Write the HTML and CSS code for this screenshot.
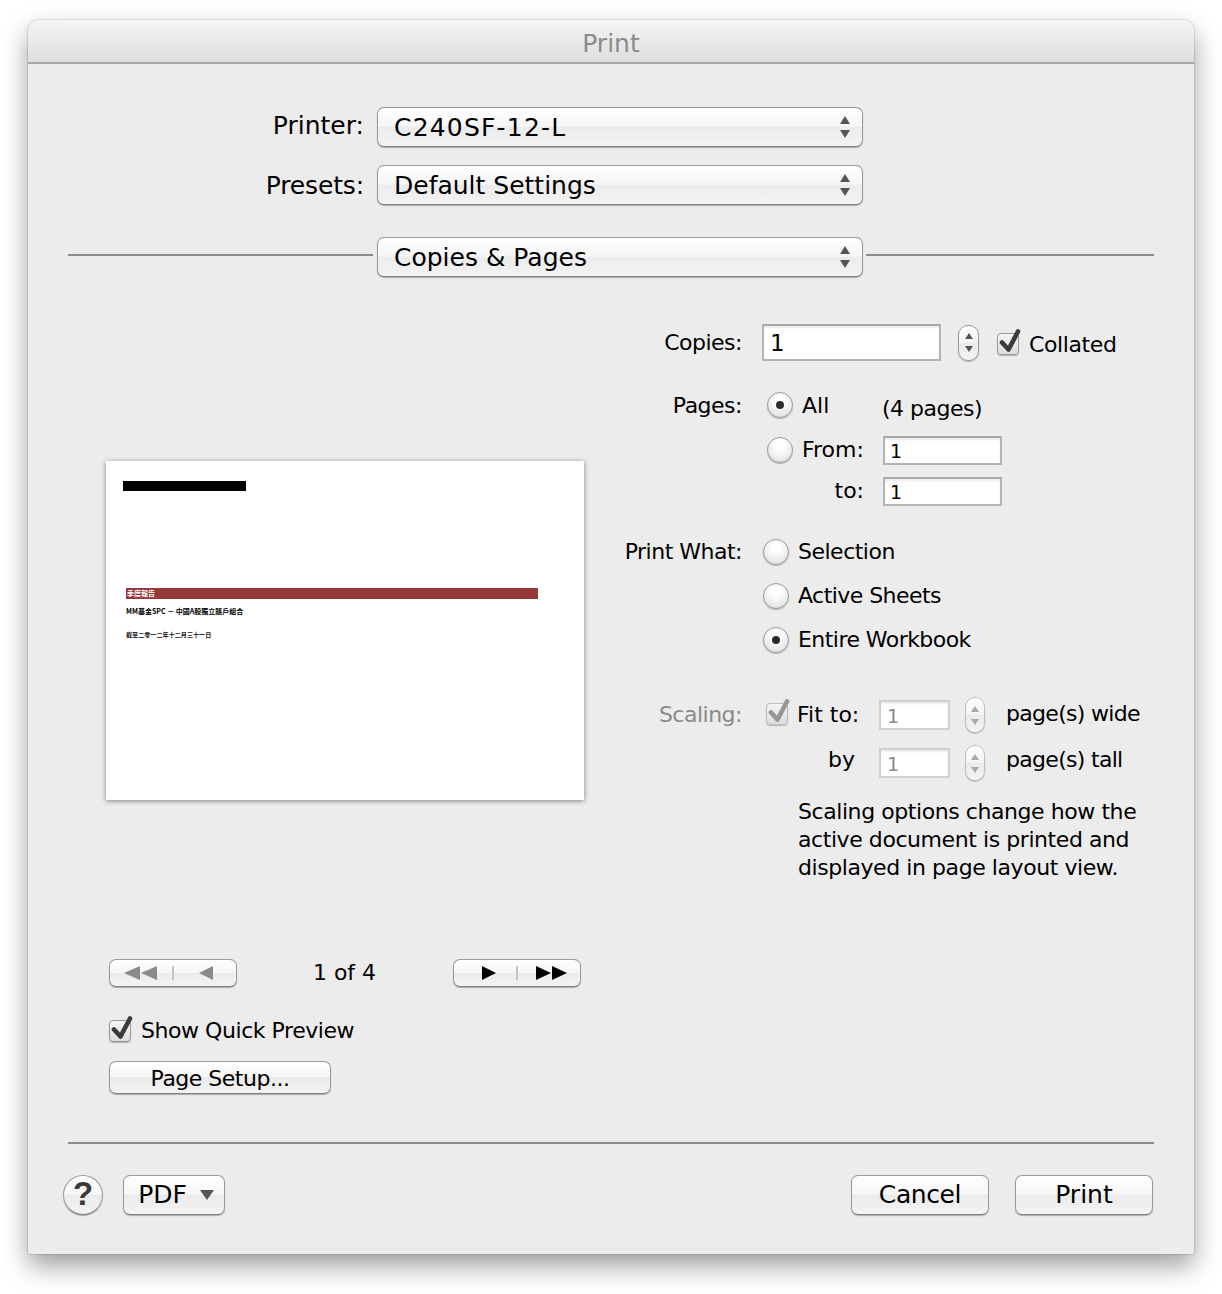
FILE: index.html
```html
<!DOCTYPE html>
<html lang="en">
<head>
<meta charset="utf-8">
<title>Print</title>
<link rel="stylesheet" href="styles.css">
</head>
<body>
<svg class="defs" width="0" height="0">
  <symbol id="updown" viewBox="0 0 10 22"><path d="M5 0L10 8H0Z"/><path d="M0 14H10L5 22Z"/></symbol>
  <symbol id="check" viewBox="0 0 26 30"><path d="M6 14.5L12.5 21.5L22 3.5" fill="none" stroke-width="4.6" stroke-linecap="round" stroke-linejoin="round"/></symbol>
</svg>
<div class="window">
  <div class="titlebar">Print</div>
  <div class="main">
    <div class="top-row first">
      <label class="top-label printer-label">Printer:</label>
      <div class="btn select"><span class="select-text select-wide">C240SF-12-L</span><svg class="updown"><use href="#updown"/></svg></div>
    </div>
    <div class="top-row second">
      <label class="top-label presets-label">Presets:</label>
      <div class="btn select"><span class="select-text">Default Settings</span><svg class="updown"><use href="#updown"/></svg></div>
    </div>
    <div class="section-row">
      <div class="rule rule-left"></div>
      <div class="btn select"><span class="select-text">Copies &amp; Pages</span><svg class="updown"><use href="#updown"/></svg></div>
      <div class="rule rule-right"></div>
    </div>

    <div class="panes">
      <div class="left">
        <div class="sheet">
          <div class="sheet-black"></div>
          <div class="sheet-red">季度報告</div>
          <div class="sheet-line">MM基金SPC － 中國A股獨立賬戶組合</div>
          <div class="sheet-date">截至二零一二年十二月三十一日</div>
        </div>
        <div class="nav">
          <div class="btn navbtn">
            <span class="seg"><svg class="tri-double nudge-l" viewBox="0 0 33 14"><path class="dim" d="M0 7L16 0V14Z"/><path class="dim" d="M17 7L33 0V14Z"/></svg></span>
            <span class="seg seg-line"><svg class="tri-single nudge-r" viewBox="0 0 14 14"><path class="dim" d="M0 7L14 0V14Z"/></svg></span>
          </div>
          <span class="nav-count">1 of 4</span>
          <div class="btn navbtn">
            <span class="seg"><svg class="tri-single nudge-r2" viewBox="0 0 14 14"><path d="M0 0L14 7L0 14Z"/></svg></span>
            <span class="seg seg-line"><svg class="tri-double nudge-r3" viewBox="0 0 31 14"><path d="M0 0L15 7L0 14Z"/><path d="M16 0L31 7L16 14Z"/></svg></span>
          </div>
        </div>
        <div class="quick">
          <span class="checkbox"><svg class="tick"><use href="#check"/></svg></span>
          <span class="quick-text">Show Quick Preview</span>
        </div>
        <div class="btn setup">Page Setup...</div>
      </div>

      <div class="right">
        <div class="row copies">
          <span class="lbl">Copies:</span>
          <span class="field field-big">1</span>
          <span class="stepper stepper-copies"><i class="up"></i><i class="down"></i></span>
          <span class="checkbox collated-box"><svg class="tick"><use href="#check"/></svg></span>
          <span class="txt collated-text">Collated</span>
        </div>

        <div class="row pages-all">
          <span class="lbl">Pages:</span>
          <span class="radio radio-pages on"></span>
          <span class="txt all-text">All</span>
          <span class="txt count-text">(4 pages)</span>
        </div>
        <div class="row pages-from">
          <span class="lbl"></span>
          <span class="radio radio-pages"></span>
          <span class="txt from-text">From:</span>
          <span class="field field-range">1</span>
        </div>
        <div class="row pages-to">
          <span class="lbl"></span>
          <span class="txt to-text">to:</span>
          <span class="field field-range">1</span>
        </div>

        <div class="row what-first">
          <span class="lbl">Print What:</span>
          <span class="radio"></span>
          <span class="txt what-text">Selection</span>
        </div>
        <div class="row what-next">
          <span class="lbl"></span>
          <span class="radio"></span>
          <span class="txt what-text">Active Sheets</span>
        </div>
        <div class="row what-next">
          <span class="lbl"></span>
          <span class="radio on"></span>
          <span class="txt what-text">Entire Workbook</span>
        </div>

        <div class="row scale-first">
          <span class="lbl lbl-dim">Scaling:</span>
          <span class="checkbox checkbox-dim"><svg class="tick"><use href="#check"/></svg></span>
          <span class="txt fit-text">Fit to:</span>
          <span class="field field-dim">1</span>
          <span class="stepper stepper-dim"><i class="up"></i><i class="down"></i></span>
          <span class="txt unit-text">page(s) wide</span>
        </div>
        <div class="row scale-next">
          <span class="lbl"></span>
          <span class="txt by-text">by</span>
          <span class="field field-dim">1</span>
          <span class="stepper stepper-dim"><i class="up"></i><i class="down"></i></span>
          <span class="txt unit-text">page(s) tall</span>
        </div>
        <p class="note">Scaling options change how the<br>active document is printed and<br>displayed in page layout view.</p>
      </div>
    </div>

    <div class="rule rule-bottom"></div>
    <div class="footer">
      <div class="btn help">?</div>
      <div class="btn action pdf">PDF<svg class="pdf-arrow" viewBox="0 0 14 10"><path d="M0 0H14L7 10Z"/></svg></div>
      <div class="btn action cancel">Cancel</div>
      <div class="btn action print">Print</div>
    </div>
  </div>
</div>
</body>
</html>
```
FILE: styles.css
```css
* { box-sizing: border-box; }
html, body { margin: 0; padding: 0; background: #fff; }
body {
  width: 1222px;
  height: 1294px;
  overflow: hidden;
  padding: 20px 0 0 28px;
  font-family: "DejaVu Sans", sans-serif;
  color: #000;
}
.defs { position: absolute; }

.window {
  width: 1166px;
  height: 1234px;
  background: #ececec;
  border-radius: 10px 10px 2px 2px;
  box-shadow: 0 0 2px rgba(0,0,0,.35), 0 12px 26px rgba(0,0,0,.38);
}
.titlebar {
  height: 44px;
  border-bottom: 2px solid #a6a6a6;
  border-radius: 10px 10px 0 0;
  background: linear-gradient(#f4f4f4, #dedede);
  text-align: center;
  font-size: 25px;
  line-height: 48px;
  color: #8a8a8a;
}
.main { padding: 0 40px; }

/* shared control skin */
.btn {
  border: 1px solid #9a9a9a;
  border-bottom-color: #808080;
  border-radius: 7px;
  background: linear-gradient(#ffffff 0%, #f6f6f6 48%, #ebebeb 50%, #f3f3f3 100%);
  box-shadow: 0 1px 1px rgba(0,0,0,.28);
}

/* top selects */
.top-row { display: flex; align-items: center; height: 40px; }
.top-row.first { margin-top: 43px; }
.top-row.second { margin-top: 18px; }
.top-label {
  width: 296px;
  text-align: right;
  font-size: 25px;
  margin-right: 13px;
}
.printer-label { position: relative; top: -2px; }
.presets-label { letter-spacing: -.15px; }
.select {
  width: 486px;
  height: 40px;
  flex: none;
  display: flex;
  align-items: center;
  justify-content: space-between;
  padding: 0 12px 0 16px;
}
.select-text { font-size: 25px; }
.select-wide { letter-spacing: 1.2px; }
.updown { width: 10px; height: 22px; fill: #555; }
.section-row { display: flex; align-items: center; height: 40px; margin-top: 32px; }
.rule { height: 2px; background: #8c8c8c; }
.section-row .rule { position: relative; top: -2px; }
.rule-left { width: 305px; margin-right: 4px; }
.rule-right { width: 288px; margin-left: 3px; }
.rule-bottom { margin-top: 47px; }

/* panes */
.panes { display: flex; height: 818px; }
.left { width: 532px; padding: 184px 0 0 38px; }
.right { width: 554px; padding-top: 47px; }

/* preview sheet */
.sheet {
  width: 478px;
  height: 339px;
  background: #fff;
  padding: 20px 0 0 17px;
  box-shadow: 0 1px 5px rgba(0,0,0,.45);
  font-family: "Noto Sans CJK TC", serif;
}
.sheet-black { width: 123px; height: 10px; background: #000; }
.sheet-red {
  width: 412px;
  height: 11px;
  margin: 97px 0 0 3px;
  background: #943838;
  color: #fff;
  font-size: 7px;
  line-height: 10px;
  font-weight: 700;
  padding-left: 1px;
}
.sheet-line { margin: 7px 0 0 3px; font-size: 7px; line-height: 10px; font-weight: 700; }
.sheet-date { margin: 14px 0 0 3px; font-size: 6.1px; line-height: 10px; font-weight: 700; color: #111; }

/* nav */
.nav { display: flex; align-items: center; margin: 159px 0 0 3px; width: 472px; justify-content: space-between; height: 28px; }
.navbtn { width: 128px; height: 28px; display: flex; align-items: center; }
.seg { flex: 1; height: 14px; display: flex; align-items: center; justify-content: center; }
.seg-line { border-left: 2px solid #c4c4c4; }
.tri-double { width: 33px; height: 14px; fill: #000; }
.tri-single { width: 14px; height: 14px; fill: #000; }
.nudge-l { margin-right: 1px; }
.nudge-r { margin-left: 2px; }
.nudge-r2 { margin-left: 8px; }
.nudge-r3 { margin-left: 4px; }
.dim { fill: #8a8a8a; }
.nav-count { font-size: 22px; position: relative; top: -1px; margin-left: -1px; }

.quick { display: flex; align-items: center; margin: 28px 0 0 3px; height: 30px; }
.quick .checkbox { top: 1px; }
.quick-text { margin-left: 10px; font-size: 22px; letter-spacing: -.45px; }
.setup {
  width: 222px;
  height: 33px;
  margin: 16px 0 0 3px;
  text-align: center;
  font-size: 22px;
  letter-spacing: -.5px;
  line-height: 33px;
}

/* checkbox, radio, field, stepper */
.checkbox {
  position: relative;
  flex: none;
  width: 22px;
  height: 22px;
  border: 1px solid #9a9a9a;
  border-radius: 4px;
  background: linear-gradient(#f5f5f5, #dcdcdc);
  box-shadow: 0 1px 1px rgba(0,0,0,.25);
}
.tick {
  position: absolute;
  left: -2px;
  top: -6px;
  width: 26px;
  height: 30px;
  stroke: #3a3a3a;
}
.checkbox-dim { opacity: .9; border-color: #b8b8b8; }
.checkbox-dim .tick { stroke: #8c8c8c; }

.radio {
  flex: none;
  width: 26px;
  height: 26px;
  border: 1px solid #9a9a9a;
  border-radius: 50%;
  background: radial-gradient(circle at 50% 30%, #ffffff 20%, #f0f0f0 55%, #d8d8d8 100%);
  box-shadow: 0 1px 1px rgba(0,0,0,.25);
  display: flex;
  align-items: center;
  justify-content: center;
}
.radio.on::after {
  content: "";
  width: 8px;
  height: 8px;
  border-radius: 50%;
  background: #2c2c2c;
}
.radio-pages { margin-left: 4px; }

.field {
  flex: none;
  display: block;
  background: #fff;
  border: 2px solid #b4b4b4;
  border-top-color: #a8a8a8;
  box-shadow: inset 0 2px 2px #ededed;
}
.field-big { width: 179px; height: 37px; font-size: 23px; line-height: 35px; padding-left: 6px; margin-left: -1px; }
.field-range { width: 119px; height: 29px; font-size: 19px; line-height: 27px; padding-left: 5px; }
.field-dim {
  width: 71px;
  height: 30px;
  font-size: 19px;
  line-height: 29px;
  padding-left: 6px;
  color: #8a8a8a;
  border-color: #d0d0d0;
  margin-left: 19px;
}

.stepper {
  position: relative;
  flex: none;
  border: 1px solid #9a9a9a;
  border-radius: 10px;
  background: linear-gradient(#ffffff, #f4f4f4 48%, #e9e9e9 50%, #f4f4f4);
  box-shadow: 0 1px 1px rgba(0,0,0,.25);
  display: flex;
  flex-direction: column;
  align-items: center;
  justify-content: center;
  gap: 7px;
}
.stepper-copies { width: 21px; height: 36px; margin-left: 17px; }
.stepper-dim { width: 20px; height: 36px; margin-left: 16px; border-color: #c0c0c0; }
.up, .down { display: block; width: 0; height: 0; border-left: 4px solid transparent; border-right: 4px solid transparent; }
.up { border-bottom: 6px solid #555; }
.down { border-top: 6px solid #555; }
.stepper-dim .up { border-bottom-color: #a8a8a8; }
.stepper-dim .down { border-top-color: #a8a8a8; }

/* right rows */
.row { display: flex; align-items: center; height: 30px; }
.lbl { flex: none; position: relative; top: -1px; width: 142px; margin-right: 21px; text-align: right; font-size: 22px; letter-spacing: -.5px; }
.copies .lbl { top: 0; }
.lbl-dim { color: #8a8a8a; }
.txt { position: relative; font-size: 22px; letter-spacing: -.5px; white-space: nowrap; }
.copies { height: 37px; }
.collated-box { margin-left: 18px; top: 1px; }
.collated-text { margin-left: 10px; top: 2px; letter-spacing: -.4px; }
.pages-all { margin-top: 29px; }
.pages-all .lbl { top: 0; }
.all-text { margin-left: 9px; width: 80px; top: 0; letter-spacing: 0; }
.count-text { top: 3px; margin-left: 0; }
.pages-from { margin-top: 15px; }
.from-text { margin-left: 9px; width: 81px; top: -1px; letter-spacing: 0; }
.pages-to { margin-top: 11px; }
.to-text { width: 101px; margin-right: 19px; top: -1px; text-align: right; letter-spacing: 0; }
.what-first { margin-top: 31px; }
.what-next { margin-top: 14px; }
.what-text { margin-left: 9px; top: -1px; }
.what-next .what-text { letter-spacing: -.55px; }
.scale-first { margin-top: 45px; }
.scale-next { margin-top: 18px; }
.scale-first .checkbox { margin-left: 3px; top: -1px; }
.fit-text { margin-left: 9px; width: 61px; top: -1px; letter-spacing: 0; }
.by-text { margin-left: 65px; width: 32px; top: -4px; letter-spacing: 0; }
.scale-first .field-dim { margin-left: 21px; }
.scale-first .stepper-dim, .scale-next .stepper-dim { margin-left: 15px; }
.unit-text { margin-left: 21px; top: -2px; letter-spacing: -.7px; }
.scale-next .unit-text { top: -4px; }
.note { margin: 20px 0 0 198px; font-size: 22px; letter-spacing: -.43px; line-height: 28px; white-space: nowrap; }

/* footer */
.footer { display: flex; align-items: center; margin-top: 31px; padding-right: 1px; }
.action { height: 40px; font-size: 25px; line-height: 38px; text-align: center; }
.help {
  width: 40px;
  height: 40px;
  margin-left: -5px;
  border-radius: 50%;
  text-align: center;
  font-family: "Liberation Sans", sans-serif;
  font-size: 33px;
  line-height: 35px;
  font-weight: 700;
  color: #3a3a3a;
}
.pdf { width: 102px; margin-left: 20px; display: flex; align-items: center; justify-content: center; gap: 13px; padding-left: 4px; }
.pdf-arrow { width: 14px; height: 10px; fill: #555; }
.cancel { width: 138px; margin-left: auto; letter-spacing: -.4px; }
.print { width: 138px; margin-left: 26px; }
```
